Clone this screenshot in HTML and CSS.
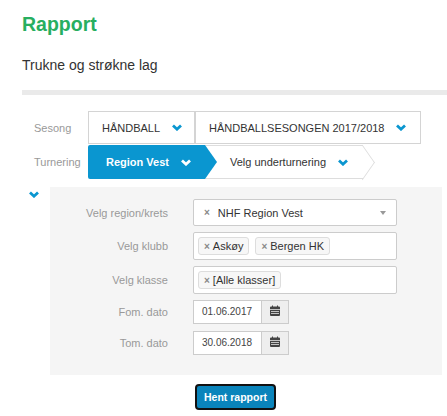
FILE: index.html
```html
<!DOCTYPE html>
<html lang="en">
<head>
  <meta charset="UTF-8">
  <title>Rapport</title>
  <link rel="stylesheet" href="styles.css">
</head>
<body>

<h1 class="page-title">Rapport</h1>
<p class="page-sub">Trukne og strøkne lag</p>
<div class="divider"></div>

<!-- Season and tournament -->
<div class="pick-row season-row">
  <span class="pick-label">Sesong</span>
  <div class="season-btn sport-btn">HÅNDBALL
    <svg class="chev" viewBox="0 0 10 7"><polyline points="1,1.500 5,5.200 9,1.500"/></svg>
  </div>
  <div class="season-btn year-btn">HÅNDBALLSESONGEN 2017/2018
    <svg class="chev" viewBox="0 0 10 7"><polyline points="1,1.500 5,5.200 9,1.500"/></svg>
  </div>
</div>
<div class="pick-row">
  <span class="pick-label">Turnering</span>
  <div class="step step-active">Region Vest
    <svg class="chev chev-white" viewBox="0 0 10 7"><polyline points="1,1.500 5,5.200 9,1.500"/></svg>
  </div>
  <div class="step step-next">Velg underturnering
    <svg class="chev" viewBox="0 0 10 7"><polyline points="1,1.500 5,5.200 9,1.500"/></svg>
  </div>
</div>

<div class="filter-wrap">
  <svg class="chev collapse-chev" viewBox="0 0 10 7"><polyline points="1,1.500 5,5.200 9,1.500"/></svg>
  <div class="filter-panel">
    <div class="form-row">
      <label class="form-label">Velg region/krets</label>
      <div class="select select-single">
        <span class="clear">×</span>
        <span class="single-value">NHF Region Vest</span>
        <span class="caret"></span>
      </div>
    </div>
    <div class="form-row">
      <label class="form-label">Velg klubb</label>
      <div class="select select-multi">
        <span class="tag"><span class="clear">×</span>Askøy</span>
        <span class="tag"><span class="clear">×</span>Bergen HK</span>
      </div>
    </div>
    <div class="form-row">
      <label class="form-label">Velg klasse</label>
      <div class="select select-multi">
        <span class="tag"><span class="clear">×</span>[Alle klasser]</span>
      </div>
    </div>
    <div class="form-row date-row">
      <label class="form-label">Fom. dato</label>
      <div class="date-group">
        <div class="date-input">01.06.2017</div>
        <div class="date-addon">
          <svg class="cal" viewBox="0 0 10 11"><path d="M0 2.500a1 1 0 0 1 1-1h1V.5h1v1h4V.5h1v1h1a1 1 0 0 1 1 1V4H0zM0 4.700h10V10a1 1 0 0 1-1 1H1a1 1 0 0 1-1-1zM1 6.200v.7h8v-.7zM1 8.200v.7h8v-.7z" fill-rule="evenodd"/></svg>
        </div>
      </div>
    </div>
    <div class="form-row date-row">
      <label class="form-label">Tom. dato</label>
      <div class="date-group">
        <div class="date-input">30.06.2018</div>
        <div class="date-addon">
          <svg class="cal" viewBox="0 0 10 11"><path d="M0 2.500a1 1 0 0 1 1-1h1V.5h1v1h4V.5h1v1h1a1 1 0 0 1 1 1V4H0zM0 4.700h10V10a1 1 0 0 1-1 1H1a1 1 0 0 1-1-1zM1 6.200v.7h8v-.7zM1 8.200v.7h8v-.7z" fill-rule="evenodd"/></svg>
        </div>
      </div>
    </div>
  </div>
</div>

<div class="actions">
  <button class="fetch-btn">Hent rapport</button>
</div>

</body>
</html>
```

FILE: styles.css
```css
* {
  margin: 0;
  padding: 0;
  box-sizing: border-box;
}
body {
  font-family: "Liberation Sans", Arial, sans-serif;
  font-size: 11px;
  color: #333;
  background: #fff;
  height: 416px;
  overflow: hidden;
}
.page-title {
  font-size: 19.5px;
  line-height: 22px;
  font-weight: bold;
  color: #27ae60;
  margin: 13px 0 0 22px;
}
.page-sub {
  font-size: 14px;
  line-height: 16px;
  color: #333;
  margin: 22px 0 0 22px;
}
.divider {
  height: 5px;
  background: #eaeaea;
  margin: 17px 0 0 22px;
}

/* Season and tournament pickers */
.pick-row {
  display: flex;
  margin-left: 34px;
  height: 34px;
}
.season-row {
  margin-top: 16px;
  margin-bottom: 1px;
  height: 33px;
}
.pick-label {
  width: 54px;
  font-size: 11px;
  color: #999;
  align-self: center;
}
.season-btn {
  display: flex;
  align-items: center;
  background: #fff;
  border: 1px solid #d4d4d4;
  font-size: 11px;
  color: #333;
}
.sport-btn {
  width: 107px;
  padding-left: 13px;
}
.sport-btn .chev {
  margin-left: 12px;
}
.year-btn {
  width: 226px;
  padding-left: 13px;
}
.year-btn .chev {
  margin-left: 12px;
}
.chev {
  width: 10px;
  height: 7px;
  fill: none;
  stroke: #0a96d0;
  stroke-width: 2.8;
}
.chev-white {
  stroke: #fff;
}
.step {
  position: relative;
  display: flex;
  align-items: center;
  font-size: 11px;
}
.step-active {
  width: 117px;
  padding-left: 18px;
  background: #0a96d0;
  color: #fff;
  font-weight: bold;
  border-radius: 2px 0 0 2px;
  z-index: 2;
}
.step-active .chev {
  margin-left: 12px;
}
.step-active::after {
  content: "";
  position: absolute;
  top: 0;
  left: 100%;
  width: 12px;
  height: 34px;
  background: #0a96d0;
  clip-path: polygon(0 0, 100% 50%, 0 100%);
}
.step-next {
  width: 158px;
  padding-left: 25px;
  background: #fff;
  border-top: 1px solid #ddd;
  border-bottom: 1px solid #ddd;
}
.step-next .chev {
  margin-left: 12px;
}
.step-next::after {
  content: "";
  position: absolute;
  top: 4px;
  right: -12px;
  width: 24px;
  height: 24px;
  border-top: 1px solid #ddd;
  border-right: 1px solid #ddd;
  transform: scaleX(.7) rotate(45deg);
}

/* Filter panel */
.filter-wrap {
  display: flex;
  margin-top: 8px;
}
.collapse-chev {
  margin: 4px 0 0 29px;
  flex: none;
}
.filter-panel {
  width: 392px;
  height: 188px;
  margin-left: 11px;
  padding-top: 12px;
  background: #f5f5f5;
}
.form-row {
  display: flex;
  align-items: center;
  margin-bottom: 6px;
}
.form-label {
  width: 143px;
  padding-right: 25px;
  text-align: right;
  font-size: 11px;
  color: #999;
  flex: none;
}
.select {
  width: 204px;
  height: 28px;
  background: #fff;
  border: 1px solid #ccc;
  border-radius: 2px;
  display: flex;
  align-items: center;
  font-size: 11px;
}
.select-single {
  height: 27px;
  padding-left: 10px;
}
.clear {
  color: #888;
  font-weight: bold;
  font-size: 10px;
}
.single-value {
  margin-left: 8px;
}
.caret {
  margin-left: auto;
  margin-right: 10px;
  border-top: 4px solid #999;
  border-left: 3.500px solid transparent;
  border-right: 3.500px solid transparent;
}
.select-multi {
  padding-left: 4px;
  gap: 6px;
}
.tag {
  display: flex;
  align-items: center;
  gap: 3px;
  height: 18px;
  padding: 0 5px;
  background: #f7f7f7;
  border: 1px solid #ddd;
  border-radius: 3px;
}
.date-row {
  margin-bottom: 7px;
}
.date-group {
  display: flex;
  height: 24px;
}
.date-input {
  width: 69px;
  background: #fff;
  border: 1px solid #ccc;
  padding-left: 8px;
  line-height: 21px;
  font-size: 10px;
  color: #444;
}
.date-addon {
  width: 27px;
  background: #eee;
  border: 1px solid #ccc;
  border-left: none;
  display: flex;
  align-items: center;
  justify-content: center;
}
.cal {
  width: 10px;
  height: 11px;
  fill: #444;
  margin-bottom: 3px;
}
.actions {
  margin-top: 9px;
  padding-left: 195px;
}
.fetch-btn {
  display: block;
  width: 81px;
  height: 26px;
  background: #0a84bb;
  color: #fff;
  border: 2px solid #111;
  border-radius: 4px;
  font-family: inherit;
  font-size: 10.5px;
  font-weight: bold;
}
```
